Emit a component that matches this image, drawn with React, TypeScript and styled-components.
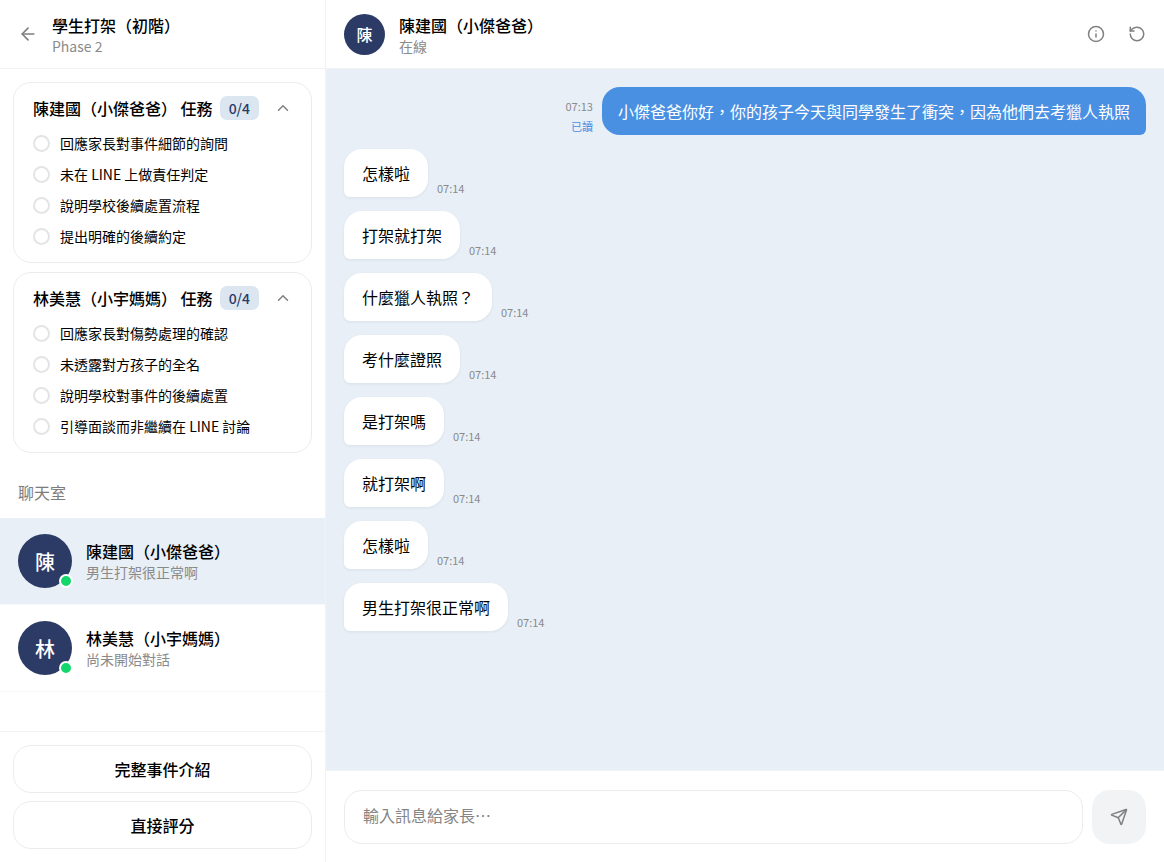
import React, { useState } from "react";
import styled, { createGlobalStyle } from "styled-components";
import { ArrowLeft, ChevronUp, Info, RotateCcw, Send } from "lucide-react";

const GlobalStyle = createGlobalStyle`
  * { box-sizing: border-box; }
  body {
    margin: 0;
    background: #ffffff;
    color: #111111;
    font-family: "Noto Sans CJK TC", "Noto Sans", sans-serif;
    font-size: 16px;
  }
  button, input { font: inherit; color: inherit; }
  h1, h2, h3, p, ul { margin: 0; padding: 0; }
`;

const navy = "#2b3b66";
const line = "#f1f2f4";
const outline = "#ebecee";
const muted = "#8a8a8a";

const Layout = styled.div`
  display: flex;
  height: 100vh;
`;

const Sidebar = styled.aside`
  display: flex;
  flex-direction: column;
  flex: 0 0 28%;
  min-width: 300px;
  border-right: 1px solid ${line};
`;

const TitleBlock = styled.div`
  flex: 1;
  min-width: 0;
`;

const TopBar = styled.header`
  display: flex;
  align-items: center;
  flex: 0 0 69px;
  gap: 14px;
  padding: 0 18px;
  border-bottom: 1px solid ${line};
  ${TitleBlock} { padding-top: 1px; }
`;

const IconButton = styled.button`
  display: flex;
  align-items: center;
  justify-content: center;
  padding: 0;
  border: 0;
  background: none;
  color: #808080;
  cursor: pointer;
`;

const Title = styled.h1`
  font-size: 16px;
  line-height: 22px;
  font-weight: 500;
  color: #000000;
`;

const Subtitle = styled.p`
  font-size: 14px;
  line-height: 20px;
  color: ${muted};
`;

const SideBody = styled.div`
  flex: 1;
  min-height: 0;
  overflow: hidden;
`;

const Cards = styled.div`
  display: flex;
  flex-direction: column;
  gap: 9px;
  padding: 13px 13px 0;
`;

const Card = styled.section`
  padding: 13px 19px 15px;
  border: 1px solid ${outline};
  border-radius: 18px;
`;

const CardHead = styled.div`
  display: flex;
  align-items: center;
  gap: 7px;
  height: 24px;
`;

const CardTitle = styled.h2`
  font-size: 16px;
  line-height: 24px;
  font-weight: 500;
  white-space: nowrap;
  color: #000000;
`;

const Count = styled.span`
  padding: 0 9px;
  border-radius: 7px;
  background: #dbe6f1;
  color: ${navy};
  font-size: 14px;
  line-height: 24px;
  font-weight: 500;
`;

const Collapse = styled(IconButton)`
  margin-left: auto;
`;

const Tasks = styled.ul`
  display: flex;
  flex-direction: column;
  gap: 10px;
  padding-top: 13px;
  list-style: none;
`;

const Task = styled.label`
  display: flex;
  align-items: center;
  gap: 10px;
  font-size: 14px;
  line-height: 21px;
  color: #000000;
`;

const Tick = styled.input`
  appearance: none;
  width: 17px;
  height: 17px;
  margin: 0;
  border: 2px solid #e3e4e6;
  border-radius: 50%;
  &:checked { background: ${navy}; border-color: ${navy}; }
`;

const SectionLabel = styled.h2`
  padding: 27px 18px 14px;
  font-size: 16px;
  line-height: 24px;
  font-weight: 400;
  color: #7d7d7d;
`;

const Room = styled.button<{ $active: boolean }>`
  display: flex;
  align-items: center;
  gap: 14px;
  width: 100%;
  padding: 16px 18px;
  border: 0;
  border-bottom: 1px solid #f8f9fa;
  background: ${(p) => (p.$active ? "#e8eff6" : "#ffffff")};
  text-align: left;
  cursor: pointer;
`;

const Avatar = styled.span<{ $size: number; $font: number }>`
  position: relative;
  display: flex;
  align-items: center;
  justify-content: center;
  flex: none;
  width: ${(p) => p.$size}px;
  height: ${(p) => p.$size}px;
  border-radius: 50%;
  background: ${navy};
  color: #ffffff;
  font-size: ${(p) => p.$font}px;
  font-weight: 500;
`;

const Online = styled.span`
  position: absolute;
  right: -1px;
  bottom: 0;
  width: 14px;
  height: 14px;
  border: 2px solid #ffffff;
  border-radius: 50%;
  background: #14d76b;
`;

const SideFooter = styled.div`
  display: flex;
  flex-direction: column;
  gap: 8px;
  padding: 13px;
  border-top: 1px solid ${line};
`;

const WideButton = styled.button`
  height: 48px;
  border: 1px solid ${outline};
  border-radius: 18px;
  background: #ffffff;
  color: #000000;
  font-weight: 500;
  cursor: pointer;
`;

const Chat = styled.main`
  display: flex;
  flex-direction: column;
  flex: 1;
  min-width: 0;
`;

const Actions = styled.div`
  display: flex;
  gap: 23px;
`;

const Messages = styled.div`
  display: flex;
  flex-direction: column;
  flex: 1;
  gap: 14px;
  min-height: 0;
  overflow: hidden;
  padding: 18px;
  background: #e8eff6;
`;

const Message = styled.div<{ $own?: boolean }>`
  display: flex;
  flex-direction: ${(p) => (p.$own ? "row-reverse" : "row")};
  align-items: flex-end;
  gap: 9px;
`;

const Bubble = styled.p<{ $own?: boolean }>`
  padding: ${(p) => (p.$own ? "12px 16px" : "12px 18px")};
  border-radius: ${(p) => (p.$own ? "18px 18px 6px 18px" : "18px 18px 18px 6px")};
  background: ${(p) => (p.$own ? "#4a90e2" : "#ffffff")};
  color: ${(p) => (p.$own ? "#ffffff" : "#000000")};
  line-height: 24px;
  box-shadow: ${(p) => (p.$own ? "none" : "0 1px 3px rgba(40, 60, 90, 0.08)")};
`;

const Meta = styled.div`
  display: flex;
  flex-direction: column;
  align-items: flex-end;
  font-size: 11px;
  line-height: 18px;
  color: ${muted};
`;

const Read = styled.span`
  margin-top: 2px;
  color: #4a90e2;
`;

const Composer = styled.form`
  display: flex;
  gap: 9px;
  padding: 19px 18px 18px;
  border-top: 1px solid ${line};
`;

const TextBox = styled.input`
  flex: 1;
  min-width: 0;
  height: 54px;
  padding: 0 18px 4px;
  border: 1px solid ${outline};
  border-radius: 18px;
  background: #ffffff;
  outline: none;
  &::placeholder { color: #858585; opacity: 1; }
`;

const SendButton = styled(IconButton)`
  width: 54px;
  height: 54px;
  border-radius: 18px;
  background: #f1f3f5;
`;

const cards = [
  {
    name: "陳建國（小傑爸爸）",
    tasks: ["回應家長對事件細節的詢問", "未在 LINE 上做責任判定", "說明學校後續處置流程", "提出明確的後續約定"],
  },
  {
    name: "林美慧（小宇媽媽）",
    tasks: ["回應家長對傷勢處理的確認", "未透露對方孩子的全名", "說明學校對事件的後續處置", "引導面談而非繼續在 LINE 討論"],
  },
];

const rooms = [
  { initial: "陳", name: "陳建國（小傑爸爸）", note: "男生打架很正常啊" },
  { initial: "林", name: "林美慧（小宇媽媽）", note: "尚未開始對話" },
];

const replies = ["怎樣啦", "打架就打架", "什麼獵人執照？", "考什麼證照", "是打架嗎", "就打架啊", "怎樣啦", "男生打架很正常啊"];

export default function App() {
  const [draft, setDraft] = useState("");

  return (
    <Layout>
      <GlobalStyle />
      <Sidebar>
        <TopBar>
          <IconButton aria-label="返回">
            <ArrowLeft size={20} />
          </IconButton>
          <TitleBlock>
            <Title>學生打架（初階）</Title>
            <Subtitle>Phase 2</Subtitle>
          </TitleBlock>
        </TopBar>
        <SideBody>
          <Cards>
            {cards.map((card) => (
              <Card key={card.name}>
                <CardHead>
                  <CardTitle>{card.name} 任務</CardTitle>
                  <Count>0/{card.tasks.length}</Count>
                  <Collapse aria-label="收合">
                    <ChevronUp size={18} />
                  </Collapse>
                </CardHead>
                <Tasks>
                  {card.tasks.map((task) => (
                    <li key={task}>
                      <Task>
                        <Tick type="checkbox" />
                        {task}
                      </Task>
                    </li>
                  ))}
                </Tasks>
              </Card>
            ))}
          </Cards>
          <SectionLabel>聊天室</SectionLabel>
          {rooms.map((room, i) => (
            <Room key={room.name} $active={i === 0}>
              <Avatar $size={54} $font={20}>
                {room.initial}
                <Online />
              </Avatar>
              <TitleBlock>
                <Title as="h3">{room.name}</Title>
                <Subtitle>{room.note}</Subtitle>
              </TitleBlock>
            </Room>
          ))}
        </SideBody>
        <SideFooter>
          <WideButton>完整事件介紹</WideButton>
          <WideButton>直接評分</WideButton>
        </SideFooter>
      </Sidebar>
      <Chat>
        <TopBar>
          <Avatar $size={41} $font={16}>陳</Avatar>
          <TitleBlock>
            <Title as="h2">陳建國（小傑爸爸）</Title>
            <Subtitle>在線</Subtitle>
          </TitleBlock>
          <Actions>
            <IconButton aria-label="說明">
              <Info size={18} />
            </IconButton>
            <IconButton aria-label="重新開始">
              <RotateCcw size={18} />
            </IconButton>
          </Actions>
        </TopBar>
        <Messages>
          <Message $own>
            <Bubble $own>小傑爸爸你好，你的孩子今天與同學發生了衝突，因為他們去考獵人執照</Bubble>
            <Meta>
              <span>07:13</span>
              <Read>已讀</Read>
            </Meta>
          </Message>
          {replies.map((text, i) => (
            <Message key={i}>
              <Bubble>{text}</Bubble>
              <Meta>
                <span>07:14</span>
              </Meta>
            </Message>
          ))}
        </Messages>
        <Composer onSubmit={(e) => e.preventDefault()}>
          <TextBox
            aria-label="輸入訊息"
            placeholder="輸入訊息給家長⋯"
            value={draft}
            onChange={(e) => setDraft(e.target.value)}
          />
          <SendButton type="submit" aria-label="傳送">
            <Send size={18} />
          </SendButton>
        </Composer>
      </Chat>
    </Layout>
  );
}
